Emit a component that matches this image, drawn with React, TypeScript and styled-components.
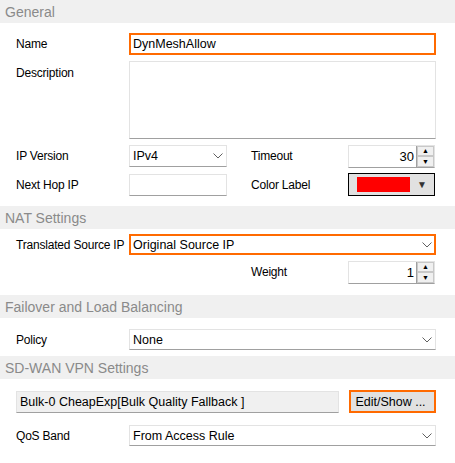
import React from "react";
import styled, { createGlobalStyle } from "styled-components";

const Global = createGlobalStyle`
  body { margin: 0; background: #fff; font-family: "Liberation Sans", Arial, sans-serif; font-size: 12px; color: #000; }
`;

const Page = styled.div`
  width: 455px;
  height: 463px;
  overflow: hidden;
`;

const SectionHeader = styled.div`
  height: 23px;
  background: #f0f0f0;
  color: #8a8a8a;
  font-size: 14px;
  padding-left: 5px;
  display: flex;
  align-items: center;
`;

const Body = styled.div<{ $pt: number; $pb: number }>`
  padding: ${({ $pt }) => $pt}px 19px ${({ $pb }) => $pb}px 16px;
  display: flex;
  flex-direction: column;
  gap: 6px;
`;

const Row = styled.div<{ $h?: number; $top?: boolean }>`
  display: flex;
  align-items: ${({ $top }) => ($top ? "flex-start" : "center")};
  height: ${({ $h }) => $h ?? 22}px;
`;

const Label = styled.div<{ $w?: number; $pt?: number }>`
  width: ${({ $w }) => $w ?? 113}px;
  flex-shrink: 0;
  letter-spacing: -0.2px;
  padding-top: ${({ $pt }) => $pt ?? 0}px;
`;

const Field = styled.div<{ $w?: number; $h?: number; $focus?: boolean }>`
  box-sizing: border-box;
  width: ${({ $w }) => ($w ? `${$w}px` : "100%")};
  flex: ${({ $w }) => ($w ? "none" : 1)};
  height: ${({ $h }) => $h ?? 22}px;
  border: ${({ $focus }) => ($focus ? "2px solid #ff6a00" : "1px solid #e3e3e3")};
  border-bottom-color: ${({ $focus }) => ($focus ? "#ff6a00" : "#a0a0a0")};
  background: #fff;
  display: flex;
  align-items: center;
  font-size: 12.5px;
  padding: 0 ${({ $focus }) => ($focus ? 2 : 3)}px;
  justify-content: space-between;
`;

const Chevron = () => (
  <svg width="10" height="6" viewBox="0 0 10 6">
    <path d="M0.5 0.5 L5 5 L9.5 0.5" fill="none" stroke="#606060" strokeWidth="1" />
  </svg>
);

const Spacer = styled.div<{ $w: number }>`
  width: ${({ $w }) => $w}px;
  flex-shrink: 0;
`;

const Spin = styled.div`
  box-sizing: border-box;
  width: 87px;
  height: 23px;
  display: flex;
  border: 1px solid #e3e3e3;
  border-bottom-color: #a0a0a0;
`;

const SpinValue = styled.div`
  flex: 1;
  text-align: right;
  padding-right: 2px;
  font-size: 13px;
  line-height: 21px;
`;

const SpinButtons = styled.div`
  width: 17px;
  display: flex;
  flex-direction: column;
  border-left: 1px solid #a0a0a0;
  background: #f0f0f0;
`;

const SpinBtn = styled.div`
  flex: 1;
  display: flex;
  align-items: center;
  justify-content: center;
  border: 1px solid #c8c8c8;
  font-size: 7px;
  color: #000;
`;

const ColorBox = styled.div`
  box-sizing: border-box;
  width: 87px;
  height: 23px;
  border: 1px solid #000;
  background: #e1e1e1;
  display: flex;
  align-items: center;
  padding: 0 7px 0 8px;
  justify-content: space-between;
`;

const Swatch = styled.div`
  width: 53px;
  height: 15px;
  background: #ff0000;
`;

const Arrow = styled.span`
  font-size: 10px;
  color: #333;
`;

const ReadOnly = styled.div`
  box-sizing: border-box;
  width: 325px;
  height: 22px;
  background: #f0f0f0;
  border: 1px solid #e3e3e3;
  border-bottom-color: #a0a0a0;
  display: flex;
  align-items: center;
  padding: 0 3px;
  font-size: 12.5px;
`;

const Button = styled.div`
  box-sizing: border-box;
  margin-left: 10px;
  width: 87px;
  height: 23px;
  border: 2px solid #ff6a00;
  background: #e1e1e1;
  display: flex;
  align-items: center;
  padding-left: 4px;
  font-size: 12.5px;
`;

const SpinBox = ({ value }: { value: string }) => (
  <Spin>
    <SpinValue>{value}</SpinValue>
    <SpinButtons>
      <SpinBtn>▲</SpinBtn>
      <SpinBtn>▼</SpinBtn>
    </SpinButtons>
  </Spin>
);

export default function App() {
  return (
    <Page>
      <Global />
      <SectionHeader>General</SectionHeader>
      <Body $pt={10} $pb={10}>
        <Row>
          <Label>Name</Label>
          <Field $focus>DynMeshAllow</Field>
        </Row>
        <Row $h={78} $top>
          <Label $pt={5}>Description</Label>
          <Field $h={78} />
        </Row>
        <Row>
          <Label>IP Version</Label>
          <Field $w={98}>IPv4<Chevron /></Field>
          <Spacer $w={24} />
          <Label $w={97}>Timeout</Label>
          <SpinBox value="30" />
        </Row>
        <Row $h={23}>
          <Label>Next Hop IP</Label>
          <Field $w={98} />
          <Spacer $w={24} />
          <Label $w={97}>Color Label</Label>
          <ColorBox><Swatch /><Arrow>▼</Arrow></ColorBox>
        </Row>
      </Body>
      <SectionHeader>NAT Settings</SectionHeader>
      <Body $pt={5} $pb={12}>
        <Row $h={21}>
          <Label>Translated Source IP</Label>
          <Field $h={21} $focus>Original Source IP<Chevron /></Field>
        </Row>
        <Row $h={22}>
          <Spacer $w={235} />
          <Label $w={97}>Weight</Label>
          <SpinBox value="1" />
        </Row>
      </Body>
      <SectionHeader>Failover and Load Balancing</SectionHeader>
      <Body $pt={11} $pb={6}>
        <Row $h={21}>
          <Label>Policy</Label>
          <Field $h={21}>None<Chevron /></Field>
        </Row>
      </Body>
      <SectionHeader>SD-WAN VPN Settings</SectionHeader>
      <Body $pt={11} $pb={5}>
        <Row $h={23}>
          <ReadOnly>Bulk-0 CheapExp[Bulk Quality Fallback ]</ReadOnly>
          <Button>Edit/Show ...</Button>
        </Row>
        <Row $h={21} style={{ marginTop: 6 }}>
          <Label>QoS Band</Label>
          <Field $h={21}>From Access Rule<Chevron /></Field>
        </Row>
      </Body>
    </Page>
  );
}
